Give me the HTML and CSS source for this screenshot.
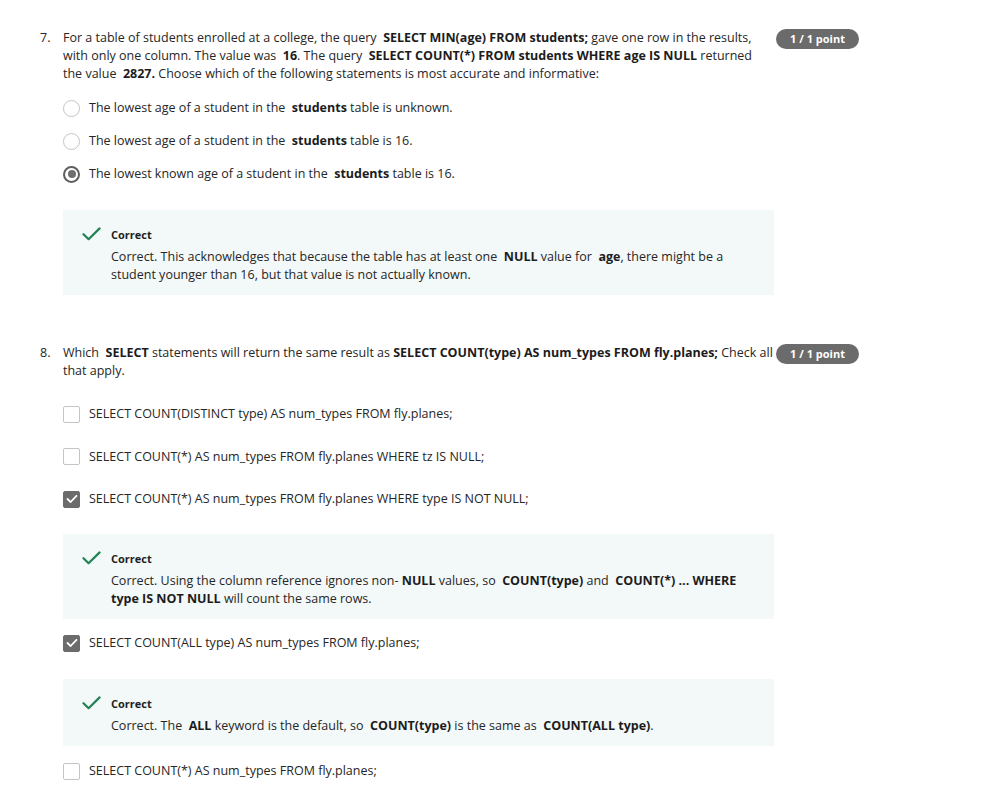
FILE: index.html
```html
<!DOCTYPE html>
<html lang="en">
<head>
<meta charset="utf-8">
<title>Quiz</title>
<link rel="stylesheet" href="styles.css">
</head>
<body>
<div class="page">
  <section class="question q7">
    <div class="qnum">7.</div>
    <div class="qbody">
      <p class="prompt narrow">For a table of students enrolled at a college, the query&nbsp; <b>SELECT MIN(age) FROM students;</b> gave one row in the results, with only one column. The value was&nbsp; <b>16</b>. The query&nbsp; <b>SELECT COUNT(*) FROM students WHERE age IS NULL</b> returned the value&nbsp; <b>2827.</b> Choose which of the following statements is most accurate and informative:</p>
      <div class="options radios">
        <div class="option"><span class="radio"></span><span class="otext">The lowest age of a student in the&nbsp; <b>students</b> table is unknown.</span></div>
        <div class="option"><span class="radio"></span><span class="otext">The lowest age of a student in the&nbsp; <b>students</b> table is 16.</span></div>
        <div class="option"><span class="radio checked"></span><span class="otext">The lowest known age of a student in the&nbsp; <b>students</b> table is 16.</span></div>
      </div>
      <div class="feedback fb-q7">
        <svg class="tick" width="19" height="14" viewBox="0 0 19 14"><path d="M1.5 7.2 L6.6 12.2 L17.6 1.4" fill="none" stroke="#1f8354" stroke-width="2.2" stroke-linecap="round" stroke-linejoin="round"/></svg>
        <div class="fbtext">
          <div class="fbtitle">Correct</div>
          <p class="fbbody">Correct. This acknowledges that because the table has at least one&nbsp; <b>NULL</b> value for&nbsp; <b>age</b>, there might be a student younger than 16, but that value is not actually known.</p>
        </div>
      </div>
    </div>
    <div class="badge">1 / 1 point</div>
  </section>

  <section class="question q8">
    <div class="qnum">8.</div>
    <div class="qbody">
      <p class="prompt">Which&nbsp; <b>SELECT</b> statements will return the same result as <b>SELECT COUNT(type) AS num_types FROM fly.planes;</b> Check all that apply.</p>
      <div class="options checks">
        <div class="option"><span class="check"></span><span class="otext">SELECT COUNT(DISTINCT type) AS num_types FROM fly.planes;</span></div>
        <div class="option"><span class="check"></span><span class="otext">SELECT COUNT(*) AS num_types FROM fly.planes WHERE tz IS NULL;</span></div>
        <div class="option"><span class="check checked"><svg width="12" height="10" viewBox="0 0 12 10"><path d="M1.5 5 L4.6 8 L10.5 1.8" fill="none" stroke="#fff" stroke-width="1.8" stroke-linecap="round" stroke-linejoin="round"/></svg></span><span class="otext">SELECT COUNT(*) AS num_types FROM fly.planes WHERE type IS NOT NULL;</span></div>
        <div class="feedback fb-a">
          <svg class="tick" width="19" height="14" viewBox="0 0 19 14"><path d="M1.5 7.2 L6.6 12.2 L17.6 1.4" fill="none" stroke="#1f8354" stroke-width="2.2" stroke-linecap="round" stroke-linejoin="round"/></svg>
          <div class="fbtext">
            <div class="fbtitle">Correct</div>
            <p class="fbbody">Correct. Using the column reference ignores non- <b>NULL</b> values, so&nbsp; <b>COUNT(type)</b> and&nbsp; <b>COUNT(*) ... WHERE type IS NOT NULL</b> will count the same rows.</p>
          </div>
        </div>
        <div class="option"><span class="check checked"><svg width="12" height="10" viewBox="0 0 12 10"><path d="M1.5 5 L4.6 8 L10.5 1.8" fill="none" stroke="#fff" stroke-width="1.8" stroke-linecap="round" stroke-linejoin="round"/></svg></span><span class="otext">SELECT COUNT(ALL type) AS num_types FROM fly.planes;</span></div>
        <div class="feedback fb-b">
          <svg class="tick" width="19" height="14" viewBox="0 0 19 14"><path d="M1.5 7.2 L6.6 12.2 L17.6 1.4" fill="none" stroke="#1f8354" stroke-width="2.2" stroke-linecap="round" stroke-linejoin="round"/></svg>
          <div class="fbtext">
            <div class="fbtitle">Correct</div>
            <p class="fbbody">Correct. The&nbsp; <b>ALL</b> keyword is the default, so&nbsp; <b>COUNT(type)</b> is the same as&nbsp; <b>COUNT(ALL type)</b>.</p>
          </div>
        </div>
        <div class="option"><span class="check"></span><span class="otext">SELECT COUNT(*) AS num_types FROM fly.planes;</span></div>
      </div>
    </div>
    <div class="badge">1 / 1 point</div>
  </section>
</div>
</body>
</html>
```

FILE: styles.css
```css
* { box-sizing: border-box; }
html, body { margin: 0; padding: 0; background: #fff; }
body {
  font-family: "Open Sans", "Noto Sans", sans-serif;
  font-size: 12.5px;
  color: #262626;
}
b { font-weight: 700; color: #1c1c1c; }
p { margin: 0; }

.page { padding: 29px 0 0 40px; width: 995px; }

.question { position: relative; display: flex; }
.q8 { margin-top: 49px; }

.qnum { width: 23px; line-height: 18px; flex: none; }
.qbody { width: 715px; flex: none; }
.prompt { line-height: 18px; }
.prompt.narrow { width: 700px; }

.badge {
  position: absolute;
  left: 736px;
  top: 0;
  width: 83px;
  height: 20px;
  border-radius: 10px;
  background: #6b6b6b;
  color: #fff;
  font-size: 11px;
  font-weight: 700;
  line-height: 20px;
  text-align: center;
}

.options { display: flex; flex-direction: column; }
.radios { margin-top: 8.5px; }
.radios .option { height: 33px; }
.checks { margin-top: 13.5px; }
.checks .option { height: 42.5px; }

.option { display: flex; align-items: center; line-height: 18px; }
.otext { margin-left: 9px; }

.radio {
  width: 17px; height: 17px; flex: none;
  border: 1.5px solid #c4c4c4;
  border-radius: 50%;
  display: flex; align-items: center; justify-content: center;
}
.radio.checked { border: 2px solid #5e5e5e; }
.radio.checked::after {
  content: "";
  width: 8px; height: 8px; border-radius: 50%;
  background: #6e6e6e;
}

.check {
  width: 17px; height: 17px; flex: none;
  border: 1.5px solid #c4c4c4;
  border-radius: 2px;
  display: flex; align-items: center; justify-content: center;
}
.check.checked { background: #6b6b6b; border-color: #6b6b6b; }
.check svg { display: block; }

.feedback {
  display: flex;
  background: #f3f8f8;
  padding: 16.5px 20px 11px 19px;
  width: 711px;
}
.fb-q7 { margin-top: 19.5px; }
.fb-a { margin-top: 13.5px; margin-bottom: 3.5px; }
.fb-b { margin-top: 14.5px; margin-bottom: 4.5px; }
.tick { flex: none; display: block; }
.fbtext { margin-left: 10px; }
.fbtitle { font-size: 11px; font-weight: 700; line-height: 16px; color: #1f1f1f; margin-bottom: 5px; }
.fbbody { line-height: 18px; }
```
